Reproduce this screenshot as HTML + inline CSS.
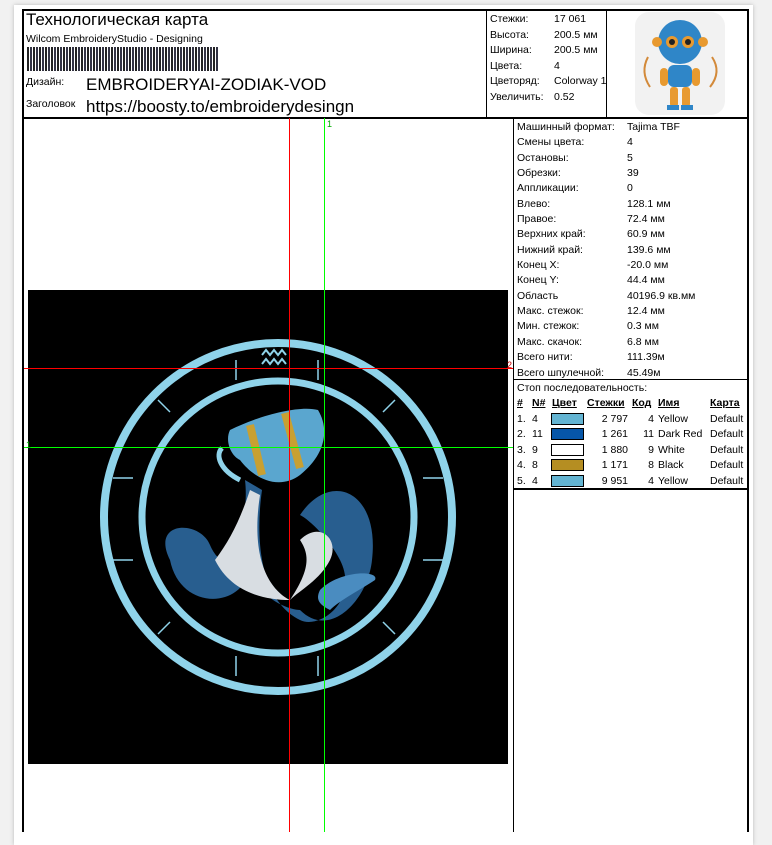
<!DOCTYPE html>
<html><head><meta charset="utf-8"><style>
body{margin:0;width:772px;height:832px;background:#f1f1f1;position:relative;overflow:hidden;font-family:"Liberation Sans",Arial,sans-serif;color:#000}
.page{position:absolute;left:14px;top:5px;width:739px;height:840px;background:#fff;box-shadow:0 0 4px #bbb}
.a{position:absolute;white-space:nowrap}
.l{position:absolute;background:#000}
.s{font-size:10.5px}
</style></head><body>
<div class="page"></div>
<div class="l" style="left:22px;top:9px;width:727px;height:2px"></div>
<div class="l" style="left:22px;top:9px;width:2px;height:823px"></div>
<div class="l" style="left:747px;top:9px;width:2px;height:823px"></div>
<div class="l" style="left:22px;top:117px;width:727px;height:2px"></div>
<div class="l" style="left:486px;top:9px;width:1px;height:109px"></div>
<div class="l" style="left:606px;top:9px;width:1px;height:109px"></div>
<div class="l" style="left:513px;top:118px;width:1px;height:714px"></div>
<div class="l" style="left:513px;top:379px;width:235px;height:1px"></div>
<div class="l" style="left:513px;top:488px;width:235px;height:2px"></div>

<div class="a" style="left:26px;top:10px;font-size:17px">Технологическая карта</div>
<div class="a" style="left:26px;top:33px;font-size:10.5px">Wilcom EmbroideryStudio - Designing</div>
<svg class="a" style="left:27px;top:47px" width="192" height="24">
<defs><pattern id="bc" width="6" height="24" patternUnits="userSpaceOnUse"><rect x="0" width="2" height="24" fill="#222"/><rect x="3" width="2" height="24" fill="#334"/></pattern></defs>
<rect width="192" height="24" fill="url(#bc)"/></svg>
<div class="a" style="left:26px;top:76px;font-size:10.5px">Дизайн:</div>
<div class="a" style="left:86px;top:75px;font-size:17px">EMBROIDERYAI-ZODIAK-VOD</div>
<div class="a" style="left:26px;top:98px;font-size:10.5px">Заголовок</div>
<div class="a" style="left:86px;top:97px;font-size:17px">https://boosty.to/embroiderydesingn</div>

<div class="a s" style="left:490px;top:12px;line-height:15.6px">Стежки:<br>Высота:<br>Ширина:<br>Цвета:<br>Цветоряд:<br>Увеличить:</div>
<div class="a s" style="left:554px;top:12px;line-height:15.6px">17 061<br>200.5 мм<br>200.5 мм<br>4<br>Colorway 1<br>0.52</div>

<svg class="a" style="left:630px;top:12px" width="100" height="103">
<rect x="5" y="0" width="90" height="103" rx="14" fill="#f2f2f2"/>
<path d="M18 45 Q10 60 20 75 M82 45 Q92 60 80 75" stroke="#d38a3a" stroke-width="2" fill="none"/>
<ellipse cx="50" cy="30" rx="22" ry="22" fill="#2f86c8"/>
<circle cx="42" cy="30" r="6" fill="#e89a30"/><circle cx="58" cy="30" r="6" fill="#e89a30"/>
<circle cx="42" cy="30" r="3" fill="#222"/><circle cx="58" cy="30" r="3" fill="#222"/>
<circle cx="27" cy="30" r="5" fill="#e89a30"/><circle cx="73" cy="30" r="5" fill="#e89a30"/>
<rect x="38" y="53" width="24" height="22" rx="6" fill="#2f86c8"/>
<rect x="30" y="56" width="8" height="18" rx="4" fill="#e89a30"/><rect x="62" y="56" width="8" height="18" rx="4" fill="#e89a30"/>
<rect x="40" y="75" width="8" height="20" rx="3" fill="#e89a30"/><rect x="52" y="75" width="8" height="20" rx="3" fill="#e89a30"/>
<rect x="37" y="93" width="12" height="5" fill="#2f86c8"/><rect x="51" y="93" width="12" height="5" fill="#2f86c8"/>
</svg>

<div class="a s" style="left:517px;top:120px;line-height:15.35px">Машинный формат:<br>Смены цвета:<br>Остановы:<br>Обрезки:<br>Аппликации:<br>Влево:<br>Правое:<br>Верхних край:<br>Нижний край:<br>Конец X:<br>Конец Y:<br>Область<br>Макс. стежок:<br>Мин. стежок:<br>Макс. скачок:<br>Всего нити:<br>Всего шпулечной:</div>
<div class="a s" style="left:627px;top:120px;line-height:15.35px">Tajima TBF<br>4<br>5<br>39<br>0<br>128.1 мм<br>72.4 мм<br>60.9 мм<br>139.6 мм<br>-20.0 мм<br>44.4 мм<br>40196.9 кв.мм<br>12.4 мм<br>0.3 мм<br>6.8 мм<br>111.39м<br>45.49м</div>
<div class="a s" style="left:517px;top:382px">Стоп последовательность:</div>
<div class="a s" style="left:517px;top:397px;font-weight:bold;text-decoration:underline">#</div>
<div class="a s" style="left:532px;top:397px;font-weight:bold;text-decoration:underline">N#</div>
<div class="a s" style="left:552px;top:397px;font-weight:bold;text-decoration:underline">Цвет</div>
<div class="a s" style="left:587px;top:397px;font-weight:bold;text-decoration:underline">Стежки</div>
<div class="a s" style="left:632px;top:397px;font-weight:bold;text-decoration:underline">Код</div>
<div class="a s" style="left:658px;top:397px;font-weight:bold;text-decoration:underline">Имя</div>
<div class="a s" style="left:710px;top:397px;font-weight:bold;text-decoration:underline">Карта</div>
<div class="a s" style="left:517px;top:412px;line-height:15.4px">1.<br>2.<br>3.<br>4.<br>5.</div>
<div class="a s" style="left:532px;top:412px;line-height:15.4px">4<br>11<br>9<br>8<br>4</div>
<div class="a" style="left:551px;top:413px;width:31px;height:10px;border:1px solid #000;background:#63b4d2"></div>
<div class="a" style="left:551px;top:428px;width:31px;height:10px;border:1px solid #000;background:#0656a8"></div>
<div class="a" style="left:551px;top:444px;width:31px;height:10px;border:1px solid #000;background:#fff"></div>
<div class="a" style="left:551px;top:459px;width:31px;height:10px;border:1px solid #000;background:#b58e22"></div>
<div class="a" style="left:551px;top:475px;width:31px;height:10px;border:1px solid #000;background:#63b4d2"></div>
<div class="a s" style="left:588px;top:412px;width:40px;text-align:right;line-height:15.4px">2 797<br>1 261<br>1 880<br>1 171<br>9 951</div>
<div class="a s" style="left:632px;top:412px;width:22px;text-align:right;line-height:15.4px">4<br>11<br>9<br>8<br>4</div>
<div class="a s" style="left:658px;top:412px;line-height:15.4px">Yellow<br>Dark Red<br>White<br>Black<br>Yellow</div>
<div class="a s" style="left:710px;top:412px;line-height:15.4px">Default<br>Default<br>Default<br>Default<br>Default</div>

<svg class="a" style="left:0;top:0" width="513" height="832">
<rect x="28" y="290" width="480" height="474" fill="#000"/>
<g fill="none" stroke="#8fd3ea">
<circle cx="278" cy="517" r="174" stroke-width="8"/>
<circle cx="278" cy="517" r="136" stroke-width="7"/>
</g>
<path d="M262 355 l4 -5 l4 5 l4 -5 l4 5 l4 -5 l4 5 M262 364 l4 -5 l4 5 l4 -5 l4 5 l4 -5 l4 5" stroke="#8fd3ea" stroke-width="2" fill="none"/>
<g stroke="#8fd3ea" stroke-width="1.5" fill="none">
<path d="M113 478 h20 M113 560 h20 M423 478 h20 M423 560 h20 M158 400 l12 12 M383 412 l12 -12 M158 634 l12 -12 M383 622 l12 12 M236 360 v20 M318 360 v20 M236 656 v20 M318 656 v20"/>
</g>
<path d="M170 560 C150 520,200 520,210 545 C230 590,250 520,245 480 L262 490 C255 540,260 600,300 620 C320 630,360 600,340 560 C330 540,310 520,300 515 C330 470,380 490,372 560 C368 600,330 640,300 610 C290 610,260 600,250 570 C240 610,180 610,170 560Z" fill="#2f6ea8" opacity="0.85"/>
<path d="M215 560 C230 540,240 520,250 490 L260 495 C250 560,270 590,290 600 C260 600,230 590,215 560Z" fill="#d8dde2"/>
<path d="M300 540 C320 520,340 540,330 560 C320 580,300 590,290 600 C310 570,310 555,300 540Z" fill="#d8dde2"/>
<path d="M320 590 C340 570,380 570,375 580 C360 590,340 600,330 610 C320 605,315 600,320 590Z" fill="#4a8cc0"/>
<path d="M230 430 C260 415,300 405,318 410 C330 430,325 455,300 475 C280 490,255 480,240 460 C230 455,225 440,230 430Z" fill="#5aa6cf"/>
<path d="M250 425 L262 475 M285 413 L300 468" stroke="#c8a032" stroke-width="8"/>
<path d="M222 448 C215 455,220 470,240 480" stroke="#8fd3ea" stroke-width="5" fill="none"/>
<rect x="289" y="118" width="1" height="714" fill="#ff0000"/>
<rect x="24" y="368" width="489" height="1" fill="#ff0000"/>
<rect x="324" y="118" width="1" height="714" fill="#00ff00"/>
<rect x="24" y="447" width="489" height="1" fill="#00ff00"/>
</svg>
<div class="a" style="left:327px;top:119px;font-size:9px;color:#0a0">1</div>
<div class="a" style="left:507px;top:360px;font-size:9px;color:#c00">2</div>
<div class="a" style="left:26px;top:440px;font-size:9px;color:#0a0">1</div>
</body></html>
